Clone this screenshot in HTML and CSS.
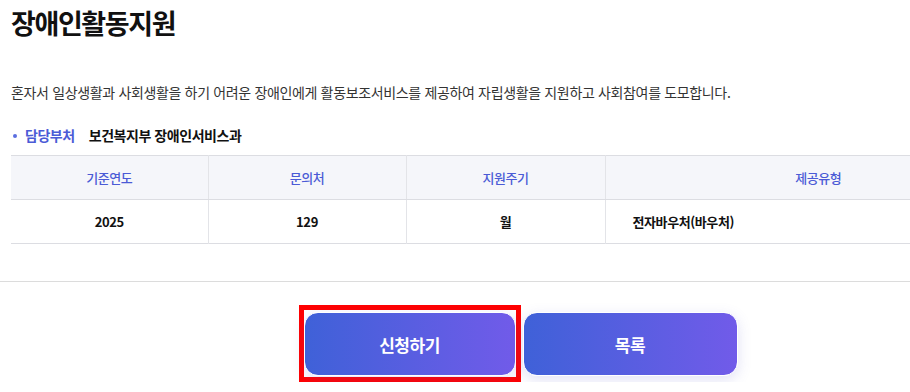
FILE: index.html
```html
<!DOCTYPE html>
<html lang="ko">
<head>
    <meta charset="UTF-8">
    <meta name="viewport" content="width=device-width, initial-scale=1.0">
    <title>장애인활동지원</title>
    <link rel="stylesheet" href="styles.css">
</head>
<body>
    <div class="page">
        <div class="content">
            <h1>장애인활동지원</h1>
            <p class="desc">혼자서 일상생활과 사회생활을 하기 어려운 장애인에게 활동보조서비스를 제공하여 자립생활을 지원하고 사회참여를 도모합니다.</p>
            <div class="dept">
                <span class="dept-label">담당부처</span>
                <span class="dept-name">보건복지부 장애인서비스과</span>
            </div>
            <table class="info-table">
                <thead>
                    <tr>
                        <th class="col-year">기준연도</th>
                        <th class="col-contact">문의처</th>
                        <th class="col-cycle">지원주기</th>
                        <th class="col-type">제공유형</th>
                    </tr>
                </thead>
                <tbody>
                    <tr>
                        <td>2025</td>
                        <td>129</td>
                        <td>월</td>
                        <td class="left">전자바우처(바우처)</td>
                    </tr>
                </tbody>
            </table>
        </div>
        <div class="actions">
            <div class="focus-ring">
                <button class="btn">신청하기</button>
            </div>
            <button class="btn">목록</button>
        </div>
    </div>
</body>
</html>
```

FILE: styles.css
```css
* {
    margin: 0;
    padding: 0;
    box-sizing: border-box;
    font-family: 'Noto Sans CJK KR', 'Noto Sans', sans-serif;
}

html, body {
    overflow: hidden;
}

body {
    background: #fff;
    color: #1a1a1a;
}

.page {
    width: 1042px;
}

.content {
    padding: 0 11px;
}

h1 {
    font-size: 27px;
    font-weight: 700;
    letter-spacing: -1.4px;
    line-height: 46px;
    color: #111;
}

.desc {
    margin-top: 36px;
    font-size: 14px;
    line-height: 20px;
    letter-spacing: -0.35px;
    color: #333;
}

.dept {
    margin-top: 23px;
    display: flex;
    align-items: center;
    font-size: 14px;
    line-height: 20px;
    font-weight: 700;
    letter-spacing: -0.45px;
}

.dept-label {
    position: relative;
    padding-left: 14px;
    color: #4b5bd6;
    margin-right: 14px;
}

.dept-label::before {
    content: '';
    position: absolute;
    left: 2px;
    top: 9px;
    width: 4px;
    height: 4px;
    border-radius: 50%;
    background: #5b6ee0;
}

.dept-name {
    color: #111;
}

.info-table {
    margin-top: 10px;
    width: 1020px;
    border-collapse: collapse;
    border-top: 1px solid #dcdde2;
    border-bottom: 1px solid #dcdde2;
    font-size: 13px;
    letter-spacing: -0.4px;
}

.info-table th,
.info-table td {
    height: 44px;
    text-align: center;
    border-left: 1px solid #e3e4e8;
}

.info-table th:first-child,
.info-table td:first-child {
    border-left: none;
}

.info-table th {
    background: #f5f6fa;
    color: #4b5bd6;
    font-weight: 500;
    border-bottom: 1px solid #dcdde2;
}

.info-table td {
    font-weight: 700;
    color: #111;
}

.info-table td.left {
    text-align: left;
    padding-left: 27px;
}

.col-year { width: 197px; }
.col-contact { width: 198px; }
.col-cycle { width: 199px; }

.actions {
    margin-top: 37px;
    border-top: 1px solid #dcdcdc;
    padding: 23px 6px 0 0;
    display: flex;
    justify-content: center;
    align-items: flex-start;
    gap: 2px;
}

.focus-ring {
    border: 5px solid #ff0000;
    padding: 2px 0 1px;
    background: #fff;
}

.focus-ring .btn {
    width: 212px;
}

.btn {
    display: block;
    width: 215px;
    height: 64px;
    border: 1px solid #fff;
    border-radius: 14px;
    background: linear-gradient(90deg, #3f61d8 0%, #715be9 100%);
    color: #fff;
    font-size: 17px;
    font-weight: 700;
    letter-spacing: -0.5px;
    box-shadow: 0 4px 14px rgba(90, 90, 200, 0.18);
    cursor: pointer;
}

.actions > .btn {
    margin-top: 7px;
}
```
